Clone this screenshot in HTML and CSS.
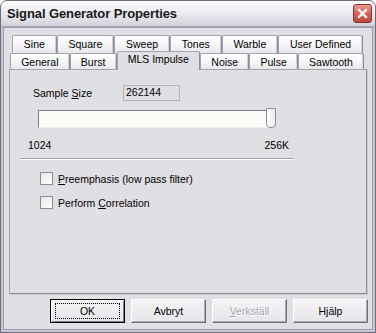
FILE: index.html
```html
<!DOCTYPE html>
<html>
<head>
<meta charset="utf-8">
<link rel="stylesheet" href="styles.css">
</head>
<body>
<div class="window">
  <div class="titlebar">
    <span class="title">Signal Generator Properties</span>
    <div class="close">
      <svg width="11" height="11" viewBox="0 0 11 11"><path d="M2 2 L9 9 M9 2 L2 9" stroke="#fff" stroke-width="2.2" stroke-linecap="square"/></svg>
    </div>
  </div>
  <div class="client">
    <div class="tabctl">
      <div class="tabrow back">
        <div class="tab">Sine</div>
        <div class="tab">Square</div>
        <div class="tab">Sweep</div>
        <div class="tab">Tones</div>
        <div class="tab">Warble</div>
        <div class="tab">User Defined</div>
      </div>
      <div class="tabrow front">
        <div class="tab">General</div>
        <div class="tab">Burst</div>
        <div class="tab sel">MLS Impulse</div>
        <div class="tab">Noise</div>
        <div class="tab">Pulse</div>
        <div class="tab">Sawtooth</div>
      </div>
      <div class="panel">
        <div class="sizerow">
          <span class="lbl">Sample <u>S</u>ize</span>
          <div class="field">262144</div>
        </div>
        <div class="slider">
          <div class="track"></div>
          <div class="thumb"></div>
        </div>
        <div class="scale"><span>1024</span><span>256K</span></div>
        <div class="sep"></div>
        <label class="chk"><span class="box"></span><span><u>P</u>reemphasis (low pass filter)</span></label>
        <label class="chk"><span class="box"></span><span>Perform <u>C</u>orrelation</span></label>
      </div>
    </div>
    <div class="buttons">
      <div class="btn def"><span class="focus">OK</span></div>
      <div class="btn">Avbryt</div>
      <div class="btn dis"><span><u>V</u>erkställ</span></div>
      <div class="btn">Hjälp</div>
    </div>
  </div>
</div>
</body>
</html>
```

FILE: styles.css
```css
html, body {
  margin: 0;
  padding: 0;
  background: #ffffff;
}
body {
  font-family: "Liberation Sans", Arial, sans-serif;
  font-size: 10.5px;
  color: #000;
}
.window {
  width: 376px;
  height: 333px;
  box-sizing: border-box;
  border: 1px solid #6c6c7c;
  border-radius: 7px 7px 0 0;
  background: #c8c8d2;
  display: flex;
  flex-direction: column;
  overflow: hidden;
}
.titlebar {
  height: 25px;
  flex: none;
  display: flex;
  align-items: center;
  justify-content: space-between;
  padding: 0 3px 0 6px;
  background: linear-gradient(#ffffff 0%, #f2f2f6 30%, #e4e4ea 65%, #d2d2dc 100%);
  border-bottom: 1px solid #a8a8b6;
}
.title {
  font-family: "Liberation Sans", Arial, sans-serif;
  font-weight: bold;
  font-size: 13px;
  color: #1a1a1a;
  letter-spacing: -0.1px;
}
.close {
  width: 19px;
  height: 19px;
  box-sizing: border-box;
  border: 1px solid #8a3030;
  border-radius: 3px;
  background: linear-gradient(#ec9d8d 0%, #d66a5a 45%, #c04838 100%);
  display: flex;
  align-items: center;
  justify-content: center;
}
.client {
  flex: 1;
  margin: 0 2px 2px 2px;
  border: 1px solid #9c9cac;
  background: #e0dfe3;
  display: flex;
  flex-direction: column;
  padding-top: 7px;
}
.tabctl {
  margin-left: 5px;
  width: 358px;
  display: flex;
  flex-direction: column;
}
.tabrow {
  display: flex;
}
.tabrow.back {
  margin-left: 3px;
  width: 351px;
  height: 18px;
}
.tabrow.front {
  margin-left: 1px;
  width: 354px;
  height: 16px;
  position: relative;
  z-index: 2;
}
.tab {
  flex: 1 1 auto;
  box-sizing: border-box;
  padding: 0 6px;
  border: 1px solid #a4a4ae;
  border-bottom: none;
  border-right-color: #8c8c96;
  border-radius: 2px 2px 0 0;
  background: linear-gradient(#ffffff 0%, #f6f6f8 50%, #e8e8ec 100%);
  box-shadow: inset -1px 0 0 #d0d0d6;
  text-align: center;
  line-height: 16px;
  white-space: nowrap;
}
.back .tab {
  line-height: 17px;
}
.tab.sel {
  margin-top: -2px;
  height: 19px;
  background: #e0dfe3;
  box-shadow: none;
  line-height: 15px;
}
.panel {
  height: 225px;
  box-sizing: border-box;
  border: 1px solid #a4a4ae;
  border-right-color: #8c8c96;
  border-bottom-color: #8c8c96;
  box-shadow: 1px 1px 0 #c8c8cc;
  background: #e0dfe3;
  display: flex;
  flex-direction: column;
}
.sizerow {
  display: flex;
  align-items: center;
  margin-top: 15px;
  height: 16px;
}
.lbl {
  margin-left: 23px;
  width: 90px;
}
.field {
  box-sizing: border-box;
  width: 57px;
  height: 16px;
  border: 1px solid #b4b4bc;
  padding: 0 2px;
  line-height: 13px;
  background: #e0dfe3;
}
.slider {
  margin: 7px 0 0 28px;
  width: 238px;
  height: 21px;
  display: flex;
  align-items: center;
  position: relative;
}
.track {
  box-sizing: border-box;
  width: 236px;
  height: 18px;
  background: #fbfbf8;
  border-top: 1px solid #7c7c84;
  border-left: 1px solid #7c7c84;
  border-right: 1px solid #eeeef0;
  border-bottom: 1px solid #eeeef0;
}
.thumb {
  position: absolute;
  right: 0;
  top: 0;
  width: 10px;
  height: 20px;
  box-sizing: border-box;
  border: 1px solid #8c8c94;
  border-radius: 1px 1px 4px 4px;
  background: linear-gradient(90deg, #ffffff, #ececf0);
}
.scale {
  margin: 10px 0 0 18px;
  width: 261px;
  display: flex;
  justify-content: space-between;
  height: 13px;
  line-height: 13px;
}
.sep {
  margin: 6px 0 0 10px;
  width: 274px;
  height: 1px;
  background: #a4a4ac;
  border-bottom: 1px solid #ffffff;
}
.chk {
  display: flex;
  align-items: center;
  margin-left: 30px;
  height: 13px;
}
.chk:first-of-type {
  margin-top: 12px;
}
.chk + .chk {
  margin-top: 11px;
}
.box {
  width: 13px;
  height: 13px;
  box-sizing: border-box;
  border: 1px solid #8c8c94;
  background: linear-gradient(135deg, #e8e8ea, #ffffff);
  margin-right: 5px;
}
.buttons {
  display: flex;
  justify-content: flex-end;
  gap: 6px;
  margin: 5px 4px 0 0;
}
.btn {
  width: 75px;
  height: 24px;
  box-sizing: border-box;
  border: 1px solid;
  border-color: #ffffff #707078 #707078 #ffffff;
  box-shadow: inset -1px -1px 0 #a8a8b0;
  background: linear-gradient(#f4f4f6, #e6e6ea);
  display: flex;
  align-items: center;
  justify-content: center;
}
.btn.def {
  border: 1px solid #000;
  box-shadow: inset 1px 1px 0 #ffffff, inset -1px -1px 0 #808088;
}
.focus {
  width: 65px;
  height: 16px;
  box-sizing: border-box;
  border: 1px dotted #000;
  text-align: center;
  line-height: 14px;
}
.btn.dis {
  color: #a6a6ac;
  text-shadow: 1px 1px 0 #ffffff;
}
```
